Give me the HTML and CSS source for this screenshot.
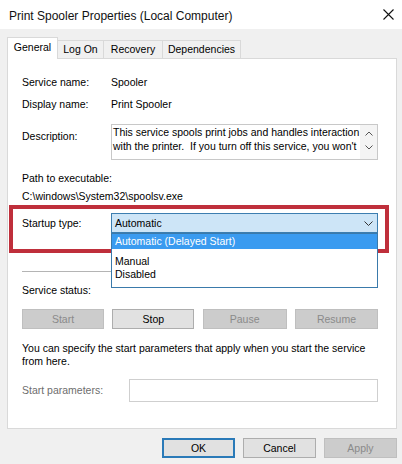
FILE: index.html
```html
<!DOCTYPE html>
<html>
<head>
<meta charset="utf-8">
<link rel="stylesheet" href="styles.css">
</head>
<body>
<div class="window">
  <div class="titlebar">
    <span class="title">Print Spooler Properties (Local Computer)</span>
    <svg class="close" width="11" height="11" viewBox="0 0 11 11"><path d="M0.5 0.5 L10.5 10.5 M10.5 0.5 L0.5 10.5" stroke="#111" stroke-width="1.1" fill="none"/></svg>
  </div>
  <div class="tabs">
    <div class="tab active t-general">General</div>
    <div class="tab t-logon">Log On</div>
    <div class="tab t-recovery">Recovery</div>
    <div class="tab t-deps">Dependencies</div>
  </div>
  <div class="panel">
    <div class="row r-name"><span class="label">Service name:</span><span>Spooler</span></div>
    <div class="row r-display"><span class="label">Display name:</span><span>Print Spooler</span></div>
    <div class="row r-desc">
      <span class="label desc-label">Description:</span>
      <div class="descbox">
        <div class="desctext">This service spools print jobs and handles interaction
with the printer.  If you turn off this service, you won't</div>
        <div class="scroll">
          <svg width="8" height="5" viewBox="0 0 8 5"><path d="M0.5 4.5 L4 1 L7.5 4.5" stroke="#555" fill="none"/></svg>
          <svg width="8" height="5" viewBox="0 0 8 5"><path d="M0.5 0.5 L4 4 L7.5 0.5" stroke="#555" fill="none"/></svg>
        </div>
      </div>
    </div>
    <div class="line path-label">Path to executable:</div>
    <div class="line path-value">C:\windows\System32\spoolsv.exe</div>
    <div class="row r-startup">
      <span class="label startup-label">Startup type:</span>
      <div class="combo">
        <span>Automatic</span>
        <svg width="9" height="5" viewBox="0 0 9 5"><path d="M0.5 0.5 L4.5 4.5 L8.5 0.5" stroke="#333" fill="none"/></svg>
        <div class="dropdown">
          <div class="item selected">Automatic (Delayed Start)</div>
          <div class="item first-plain">Manual</div>
          <div class="item">Disabled</div>
        </div>
      </div>
    </div>
    <div class="sep"></div>
    <div class="line status">Service status:</div>
    <div class="svcbtns">
      <div class="btn disabled">Start</div>
      <div class="btn">Stop</div>
      <div class="btn disabled">Pause</div>
      <div class="btn disabled">Resume</div>
    </div>
    <p class="note">You can specify the start parameters that apply when you start the service<br>from here.</p>
    <div class="row r-params">
      <span class="label params-label">Start parameters:</span>
      <div class="input"></div>
    </div>
    <div class="redbox"></div>
  </div>
  <div class="footer">
    <div class="btn fbtn default">OK</div>
    <div class="btn fbtn">Cancel</div>
    <div class="btn fbtn disabled">Apply</div>
  </div>
</div>
</body>
</html>
```
FILE: styles.css
```css
html, body {
  margin: 0;
  padding: 0;
}
body {
  width: 402px;
  height: 464px;
  overflow: hidden;
  background: #f0f0f0;
  font-family: "Liberation Sans", Arial, sans-serif;
  font-size: 10.5px;
  color: #000;
}
.window {
  width: 402px;
  height: 464px;
  background: #f0f0f0;
}
.titlebar {
  height: 29px;
  background: #fff;
  display: flex;
  align-items: center;
  justify-content: space-between;
  padding: 3px 8px 0 9px;
  box-sizing: border-box;
}
.title {
  font-size: 12px;
  color: #111;
}
.close {
  display: block;
  margin-top: -3px;
}
.tabs {
  display: flex;
  align-items: flex-end;
  margin: 8px 0 0 7px;
  height: 21px;
}
.tab {
  box-sizing: border-box;
  height: 18px;
  border: 1px solid #d9d9d9;
  border-bottom: none;
  background: #f0f0f0;
  line-height: 17px;
  text-align: center;
  margin-left: -1px;
}
.tab.active {
  height: 22px;
  margin-bottom: -1px;
  margin-left: 0;
  background: #fff;
  position: relative;
  z-index: 2;
  line-height: 18px;
}
.t-general { width: 51px; }
.t-logon { width: 47px; }
.t-recovery { width: 60px; }
.t-deps { width: 79px; }
.panel {
  position: relative;
  margin-left: 7px;
  width: 390px;
  height: 371px;
  box-sizing: border-box;
  border: 1px solid #d9d9d9;
  background: #fff;
  padding: 0 18px 0 14px;
}
.row {
  display: flex;
  line-height: 14px;
}
.line {
  line-height: 14px;
}
.label {
  width: 89px;
  flex: none;
}
.r-name { margin-top: 16px; }
.r-display { margin-top: 8px; }
.r-desc { margin-top: 13px; }
.desc-label { padding-top: 5px; }
.descbox {
  width: 267px;
  height: 36px;
  box-sizing: border-box;
  border: 1px solid #c8c8c8;
  display: flex;
}
.desctext {
  flex: 1;
  min-width: 0;
  overflow: hidden;
  white-space: pre;
  padding-left: 1px;
  line-height: 14px;
}
.scroll {
  width: 17px;
  flex: none;
  background: #f4f4f4;
  display: flex;
  flex-direction: column;
  align-items: center;
  padding-top: 6px;
  gap: 9px;
  box-sizing: border-box;
}
.scroll svg { display: block; }
.path-label { margin-top: 11px; }
.path-value { margin-top: 4px; }
.r-startup { margin-top: 10px; }
.startup-label { line-height: 20px; }
.combo {
  position: relative;
  width: 267px;
  height: 20px;
  box-sizing: border-box;
  border: 1px solid #3c7eb0;
  background: #cde5f7;
  display: flex;
  align-items: center;
  justify-content: space-between;
  padding: 0 4px 0 3px;
  line-height: 18px;
}
.combo svg { display: block; }
.dropdown {
  position: absolute;
  z-index: 3;
  left: -1px;
  top: 19px;
  width: 267px;
  box-sizing: border-box;
  background: #fff;
  border: 1px solid #3a7aab;
  padding-bottom: 6px;
}
.item {
  padding-left: 3px;
  line-height: 13px;
}
.item.selected {
  background: #3a9bf0;
  color: #fff;
  line-height: 15px;
}
.item.first-plain { margin-top: 6px; }
.sep {
  margin-top: 38px;
  height: 1px;
  background: #b4b4b4;
}
.status { margin-top: 11px; }
.svcbtns {
  margin-top: 12px;
  display: grid;
  grid-template-columns: 82px 82px 84px 83px;
  column-gap: 8px;
  justify-content: space-between;
}
.btn {
  box-sizing: border-box;
  height: 20px;
  border: 1px solid #adadad;
  background: #e1e1e1;
  text-align: center;
  line-height: 18px;
}
.btn.disabled {
  background: #cccccc;
  border-color: #bfbfbf;
  color: #8a8a8a;
}
.note {
  margin: 13px 0 0 0;
  line-height: 13px;
}
.r-params { margin-top: 11px; }
.params-label {
  width: 107px;
  line-height: 23px;
  color: #6d6d6d;
}
.input {
  flex: 1;
  height: 23px;
  box-sizing: border-box;
  border: 1px solid #cfcfcf;
  background: #fff;
}
.redbox {
  position: absolute;
  z-index: 1;
  left: 1px;
  top: 146px;
  width: 380px;
  height: 48px;
  box-sizing: border-box;
  border: 4px solid #bf2f3b;
}
.footer {
  margin-top: 9px;
  display: flex;
  justify-content: flex-end;
  gap: 8px;
  padding-right: 5px;
}
.fbtn {
  width: 73px;
}
.fbtn.default {
  border: 2px solid #2a7ab8;
  line-height: 16px;
}
```
